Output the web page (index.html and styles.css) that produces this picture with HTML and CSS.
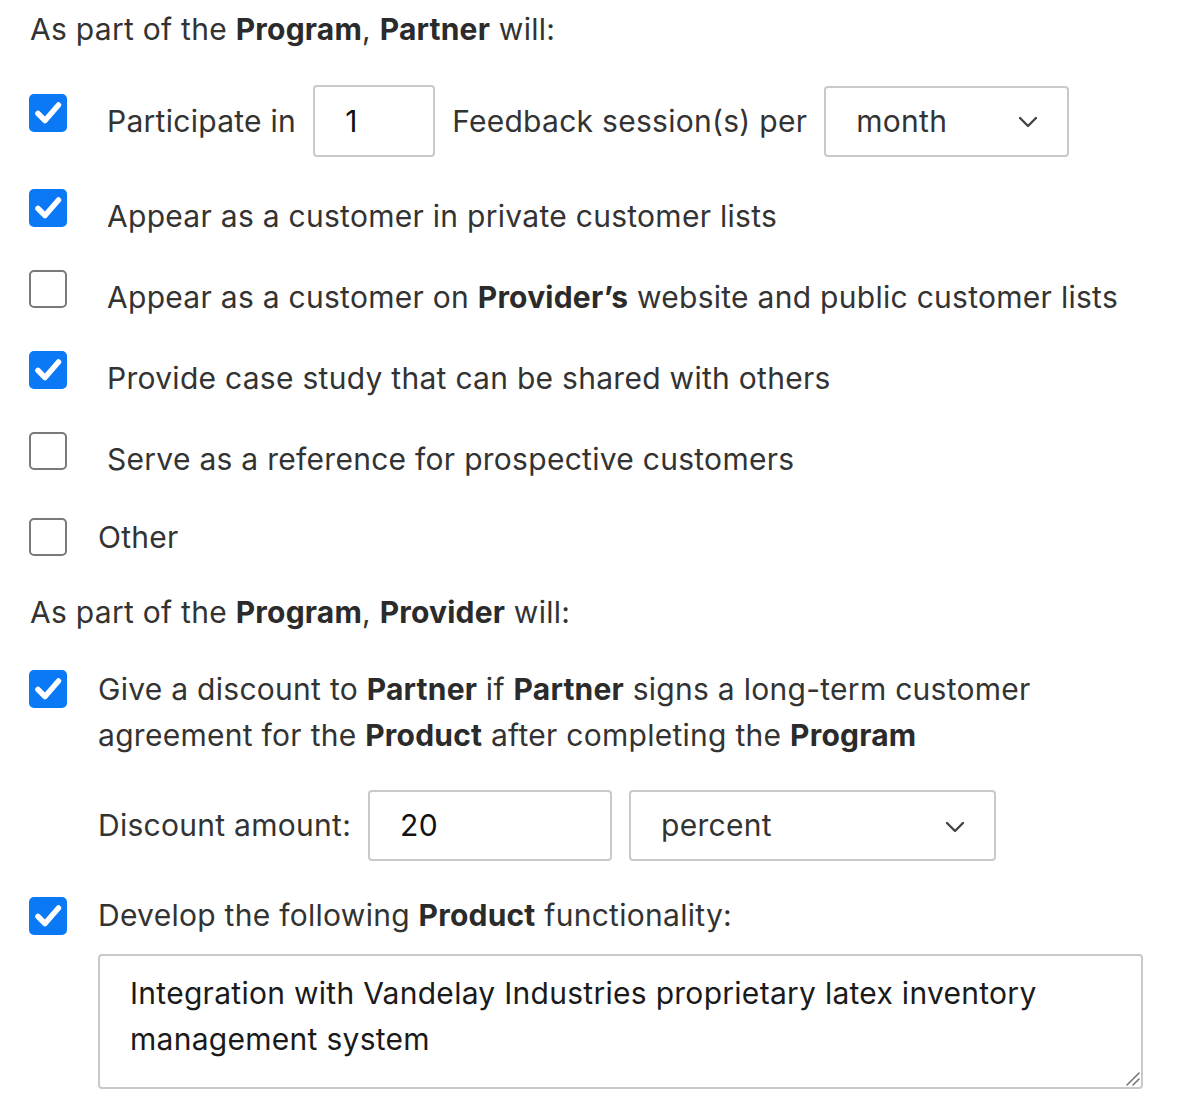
FILE: index.html
```html
<!DOCTYPE html>
<html lang="en">
<head>
<meta charset="utf-8">
<title>Program terms</title>
<link rel="stylesheet" href="styles.css">
</head>
<body>
<form class="terms">
  <p class="heading">As part of the <b>Program</b>, <b>Partner</b> will:</p>

  <div class="group partner">
    <div class="opt opt-raised opt-first">
      <span class="box checked"><svg viewBox="0 0 38 38" width="38" height="38"><path d="M9 19.5 L16 26.5 L29.5 11" fill="none" stroke="#fff" stroke-width="5.5" stroke-linecap="round" stroke-linejoin="round"/></svg></span>
      <span class="txt">Participate in</span>
      <span class="field f-num">1</span>
      <span class="txt">Feedback session(s) per</span>
      <span class="field f-select f-month"><span>month</span><svg class="chev" viewBox="0 0 20 12" width="20" height="12"><path d="M2 2 L10 10 L18 2" fill="none" stroke="#444" stroke-width="2.4" stroke-linecap="round" stroke-linejoin="round"/></svg></span>
    </div>

    <div class="opt opt-raised">
      <span class="box checked"><svg viewBox="0 0 38 38" width="38" height="38"><path d="M9 19.5 L16 26.5 L29.5 11" fill="none" stroke="#fff" stroke-width="5.5" stroke-linecap="round" stroke-linejoin="round"/></svg></span>
      <span class="txt">Appear as a customer in private customer lists</span>
    </div>

    <div class="opt opt-raised">
      <span class="box"></span>
      <span class="txt">Appear as a customer on <b>Provider’s</b> website and public customer lists</span>
    </div>

    <div class="opt opt-raised">
      <span class="box checked"><svg viewBox="0 0 38 38" width="38" height="38"><path d="M9 19.5 L16 26.5 L29.5 11" fill="none" stroke="#fff" stroke-width="5.5" stroke-linecap="round" stroke-linejoin="round"/></svg></span>
      <span class="txt">Provide case study that can be shared with others</span>
    </div>

    <div class="opt opt-raised">
      <span class="box"></span>
      <span class="txt">Serve as a reference for prospective customers</span>
    </div>
  </div>

  <div class="opt opt-plain opt-other">
    <span class="box"></span>
    <span class="txt">Other</span>
  </div>

  <p class="heading heading-2">As part of the <b>Program</b>, <b>Provider</b> will:</p>

  <div class="opt opt-plain opt-top opt-discount">
    <span class="box checked"><svg viewBox="0 0 38 38" width="38" height="38"><path d="M9 19.5 L16 26.5 L29.5 11" fill="none" stroke="#fff" stroke-width="5.5" stroke-linecap="round" stroke-linejoin="round"/></svg></span>
    <span class="txt para">Give a discount to <b>Partner</b> if <b>Partner</b> signs a long-term customer agreement for the <b>Product</b> after completing the <b>Program</b></span>
  </div>

  <div class="sub discount-row">
    <span class="txt">Discount amount:</span>
    <span class="field f-amount">20</span>
    <span class="field f-select f-percent"><span>percent</span><svg class="chev" viewBox="0 0 20 12" width="20" height="12"><path d="M2 2 L10 10 L18 2" fill="none" stroke="#444" stroke-width="2.4" stroke-linecap="round" stroke-linejoin="round"/></svg></span>
  </div>

  <div class="opt opt-plain opt-develop">
    <span class="box checked"><svg viewBox="0 0 38 38" width="38" height="38"><path d="M9 19.5 L16 26.5 L29.5 11" fill="none" stroke="#fff" stroke-width="5.5" stroke-linecap="round" stroke-linejoin="round"/></svg></span>
    <span class="txt">Develop the following <b>Product</b> functionality:</span>
  </div>

  <div class="sub area-wrap">
    <div class="area-box">
      <textarea class="area" rows="2">Integration with Vandelay Industries proprietary latex inventory management system</textarea>
      <svg class="grip" viewBox="0 0 16 16" width="16" height="16"><path d="M3 15 L15 3 M9 15 L15 9" fill="none" stroke="#777" stroke-width="1.6" stroke-linecap="round"/></svg>
    </div>
  </div>
</form>
</body>
</html>
```
FILE: styles.css
```css
* { box-sizing: border-box; }

html, body {
  margin: 0;
  padding: 0;
  background: #fff;
}

body {
  font-family: Inter, "Noto Sans", "Liberation Sans", sans-serif;
  font-size: 30px;
  line-height: 45px;
  letter-spacing: 0.28px;
  color: #333;
}

b { font-weight: 700; color: #2b2b2b; letter-spacing: 0.2px; }

.terms {
  display: flex;
  flex-direction: column;
  padding: 7px 0 0 29px;
}

.heading {
  margin: 0;
  padding-left: 1px;
}

.group {
  display: flex;
  flex-direction: column;
  gap: 26px;
  margin-top: 33px;
}

.opt {
  display: flex;
  align-items: center;
}

.opt-raised { gap: 40px; }
.opt-raised .box { margin-bottom: 17px; }

.opt-first { gap: 17px; }
.opt-first .box { margin-right: 23px; }
.opt-first + .opt { margin-top: 5.5px; }

.opt-plain { gap: 31px; }
.opt-top { align-items: flex-start; }
.opt-top .box { margin-top: 4px; }

.opt-other { margin-top: 28px; }
.heading-2 { margin-top: 30px; }
.opt-discount { margin-top: 31.5px; }
.opt-develop { margin-top: 32px; }

.para {
  line-height: 46px;
  max-width: 1000px;
}

.box {
  flex: none;
  width: 38px;
  height: 38px;
  border: 2px solid #7a7a7a;
  border-radius: 5px;
  background: #fff;
  display: block;
}

.box.checked {
  border: none;
  background: #0b78f6;
}

.box svg { display: block; }

.txt { white-space: nowrap; }
.para { white-space: normal; }

.field {
  flex: none;
  display: flex;
  align-items: center;
  height: 72px;
  border: 2px solid #c9c9c9;
  border-radius: 4px;
  background: #fff;
  padding-left: 30px;
  color: #111;
}

.f-num { width: 122px; }
.f-amount { width: 244px; height: 71px; }

.f-select {
  justify-content: space-between;
  padding-right: 29px;
  color: #333;
}

.f-month { width: 245px; height: 71px; }
.f-percent { width: 367px; height: 71px; }

.chev { display: block; margin-top: 2px; }

.sub {
  display: flex;
  align-items: center;
  gap: 17px;
  padding-left: 69px;
}

.discount-row { margin-top: 32px; }

.area-wrap { margin-top: 16px; }

.area-box {
  position: relative;
  width: 1045px;
  height: 135px;
}

.area {
  display: block;
  width: 100%;
  height: 100%;
  border: 2px solid #c9c9c9;
  border-radius: 4px;
  padding: 14px 30px;
  font: inherit;
  letter-spacing: 0.28px;
  line-height: 46px;
  color: #1a1a1a;
  resize: none;
  outline: none;
  overflow: hidden;
  background: #fff;
}

.grip {
  position: absolute;
  right: 3px;
  bottom: 3px;
  display: block;
}
```
